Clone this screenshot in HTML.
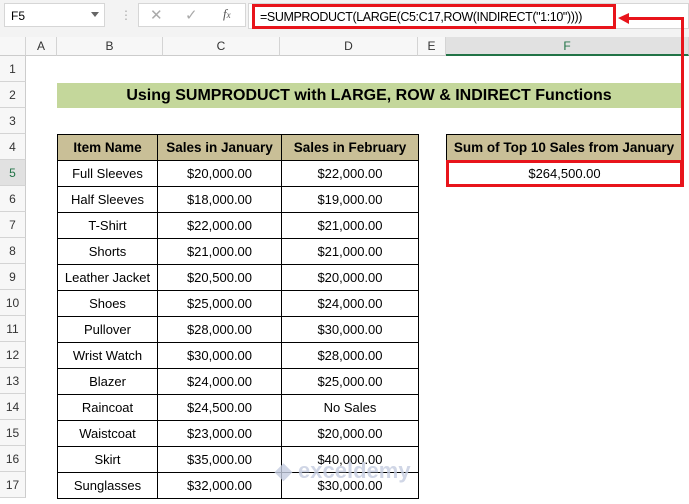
<!DOCTYPE html>
<html><head><style>
*{margin:0;padding:0;box-sizing:border-box}
body{width:689px;height:504px;overflow:hidden;background:#fff;font-family:"Liberation Sans",sans-serif;position:relative}
.a{position:absolute}
.cell{position:absolute;display:flex;align-items:center;justify-content:center;font-size:13px;color:#000;font-family:"Liberation Sans",sans-serif}
.h{font-weight:bold;background:#c9bf97;font-size:13.5px}
.rh{position:absolute;left:0;width:26px;text-align:center;font-size:12px;color:#333;display:flex;align-items:center;justify-content:center;border-bottom:1px solid #d4d4d4;background:#f7f7f7;border-right:1px solid #ccc}
.ch{position:absolute;top:37px;height:19px;font-size:12px;color:#333;display:flex;align-items:center;justify-content:center;border-right:1px solid #d4d4d4;background:#f7f7f7;border-bottom:1px solid #ccc}
</style></head><body>
<div class="a" style="left:0;top:0;width:689px;height:37px;background:#f3f3f3"></div>
<div class="a" style="left:4px;top:3px;width:101px;height:24px;background:#fff;border:1px solid #d6d6d6;font-size:12px;padding:5px 0 0 6px">F5</div>
<div class="a" style="left:91px;top:12px;width:0;height:0;border-left:4px solid transparent;border-right:4px solid transparent;border-top:5px solid #666"></div>
<div class="a" style="left:120px;top:8px;color:#aaa;font-size:12px">⋮</div>
<div class="a" style="left:138px;top:3px;width:108px;height:24px;background:#fff;border:1px solid #d6d6d6"></div>
<div class="a" style="left:150px;top:6px;color:#aaa;font-size:15px">✕</div>
<div class="a" style="left:185px;top:6px;color:#aaa;font-size:15px">✓</div>
<div class="a" style="left:223px;top:6px;color:#555;font-size:13px;font-style:italic;font-family:'Liberation Serif',serif">f<span style="font-size:9px">x</span></div>
<div class="a" style="left:248px;top:3px;width:441px;height:26px;background:#fff;border:1px solid #d6d6d6"></div>
<div class="a" style="left:252px;top:4px;width:364px;height:25px;border:3px solid #e8141b;font-size:12.5px;letter-spacing:-0.4px;padding:3px 0 0 5px;white-space:nowrap">=SUMPRODUCT(LARGE(C5:C17,ROW(INDIRECT("1:10"))))</div>
<div class="ch" style="left:0;width:26px"></div>
<div class="ch" style="left:26px;width:31px">A</div>
<div class="ch" style="left:57px;width:106px">B</div>
<div class="ch" style="left:163px;width:117px">C</div>
<div class="ch" style="left:280px;width:138px">D</div>
<div class="ch" style="left:418px;width:28px">E</div>
<div class="ch" style="left:446px;width:243px;background:#e1e1e1;color:#217346;border-bottom:2px solid #217346">F</div>
<div id="rows"></div>
<div class="a" style="left:57px;top:83px;width:624px;height:25px;background:#c4d79b;display:flex;align-items:center;justify-content:center;font-weight:bold;font-size:16px">Using SUMPRODUCT with LARGE, ROW &amp; INDIRECT Functions</div>
<div id="t"></div>
<div class="cell h" style="left:446px;top:134px;width:236px;height:27px;border:1px solid #000">Sum of Top 10 Sales from January</div>
<div class="cell" style="left:446px;top:160px;width:237px;height:27px;border:3px solid #e8141b">$264,500.00</div>
<div class="a" style="left:681px;top:17px;width:3px;height:170px;background:#e8141b"></div>
<div class="a" style="left:628px;top:17px;width:55px;height:3px;background:#e8141b"></div>
<div class="a" style="left:618px;top:13px;width:0;height:0;border-top:5px solid transparent;border-bottom:6px solid transparent;border-right:11px solid #e8141b"></div>
<div class="a" style="left:275px;top:458px;font-size:22px;color:#c5cde0;font-weight:bold;opacity:.8">◆ exceldemy</div>
<script>
var r='';for(var i=1;i<=17;i++){var t=56+(i-1)*26;r+='<div class="rh" style="top:'+t+'px;height:26px;'+(i==5?'background:#e1e1e1;color:#217346;':'')+'">'+i+'</div>';}
document.getElementById('rows').innerHTML=r;
var d=[["Full Sleeves","$20,000.00","$22,000.00"],["Half Sleeves","$18,000.00","$19,000.00"],["T-Shirt","$22,000.00","$21,000.00"],["Shorts","$21,000.00","$21,000.00"],["Leather Jacket","$20,500.00","$20,000.00"],["Shoes","$25,000.00","$24,000.00"],["Pullover","$28,000.00","$30,000.00"],["Wrist Watch","$30,000.00","$28,000.00"],["Blazer","$24,000.00","$25,000.00"],["Raincoat","$24,500.00","No Sales"],["Waistcoat","$23,000.00","$20,000.00"],["Skirt","$35,000.00","$40,000.00"],["Sunglasses","$32,000.00","$30,000.00"]];
var x=[57,157,281,418],s='';
var hd=["Item Name","Sales in January","Sales in February"];
for(var c=0;c<3;c++)s+='<div class="cell h" style="left:'+x[c]+'px;top:134px;width:'+(x[c+1]-x[c]+1)+'px;height:27px;border:1px solid #000">'+hd[c]+'</div>';
for(var i=0;i<13;i++)for(var c=0;c<3;c++)s+='<div class="cell" style="left:'+x[c]+'px;top:'+(160+i*26)+'px;width:'+(x[c+1]-x[c]+1)+'px;height:27px;border:1px solid #000">'+d[i][c]+'</div>';
document.getElementById('t').innerHTML=s;
</script>
</body></html>
